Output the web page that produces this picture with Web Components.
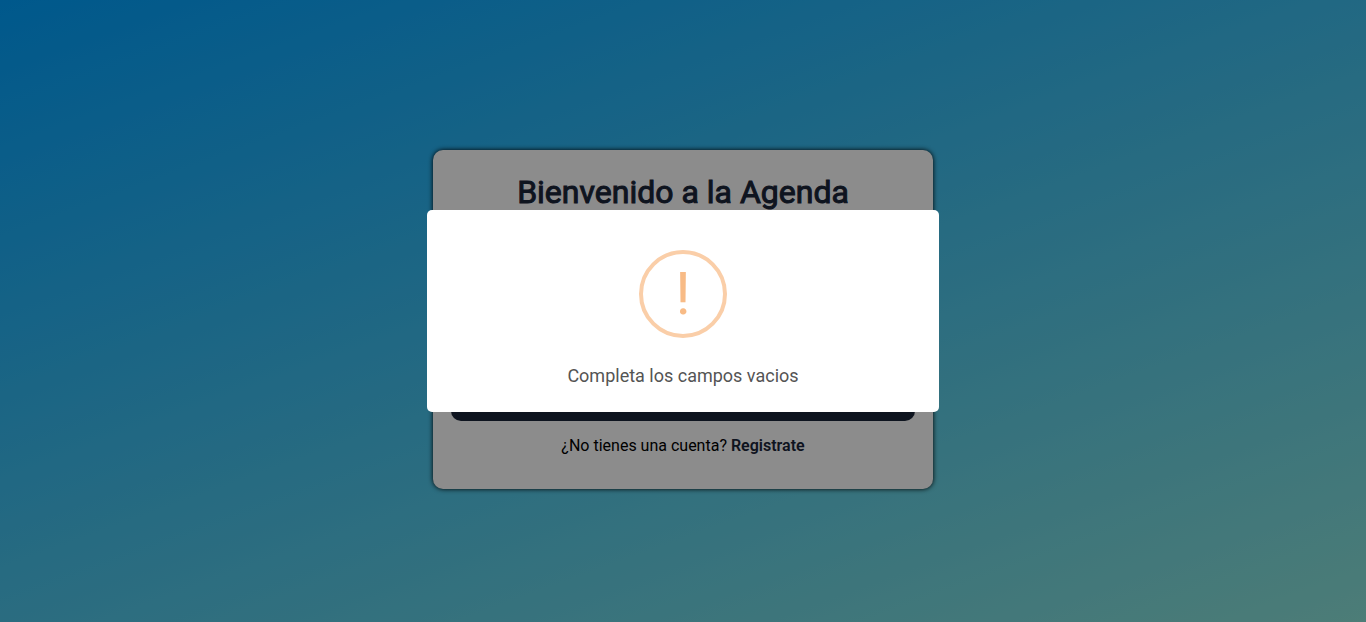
<!DOCTYPE html>
<html lang="es">
<head>
<meta charset="utf-8">
<meta name="viewport" content="width=device-width, initial-scale=1">
<title>Agenda</title>
<style>
  html { height: 100%; }
  body {
    margin: 0;
    min-height: 100%;
    font-family: Roboto, "Liberation Sans", sans-serif;
    font-size: 16px;
    background: linear-gradient(160deg, #0093e9 0%, #80d0c7 100%) fixed;
  }
</style>
</head>
<body>
<agenda-app></agenda-app>

<script>
class LoginCard extends HTMLElement {
  constructor() {
    super();
    this.attachShadow({ mode: "open" }).innerHTML = `
      <style>
        :host {
          display: block;
          box-sizing: border-box;
          width: 100%;
          max-width: 500px;
          padding: 24px 18px 34px;
          border-radius: 10px;
          background: #e9e9e9;
          box-shadow: 0 0 5px #000;
          text-align: center;
        }
        h1 {
          margin: 0;
          font-size: 32px;
          font-weight: 400;
          line-height: 36px;
          color: #182234;
          -webkit-text-stroke: 1px #182234;
        }
        form { display: grid; gap: 32px; margin: 27px 0 15px; }
        input, button {
          box-sizing: border-box;
          width: 100%;
          height: 40px;
          border: 0;
          border-radius: 10px;
          font: inherit;
        }
        input { padding: 0 12px; background: #fff; }
        button { background: #182234; color: #fff; }
        p { margin: 0; line-height: 19px; }
      </style>
      <h1><slot name="title"></slot></h1>
      <form>
        <input type="email" aria-label="Correo">
        <input type="password" aria-label="Clave">
        <button type="button" aria-label="Entrar"></button>
      </form>
      <p><slot></slot></p>`;
  }
}
customElements.define("login-card", LoginCard);

class WarningIcon extends HTMLElement {
  constructor() {
    super();
    this.attachShadow({ mode: "open" }).innerHTML = `
      <style>
        :host {
          display: flex;
          align-items: center;
          justify-content: center;
          width: 80px;
          height: 80px;
          border: 4px solid #facea8;
          border-radius: 50%;
          color: #f8bb86;
          font-size: 60px;
          line-height: 80px;
        }
      </style>
      <span>!</span>`;
  }
}
customElements.define("warning-icon", WarningIcon);

class AlertDialog extends HTMLElement {
  constructor() {
    super();
    this.attachShadow({ mode: "open" }).innerHTML = `
      <style>
        :host {
          position: fixed;
          inset: 0;
          display: flex;
          align-items: center;
          justify-content: center;
          padding: 10px;
          background: rgba(0, 0, 0, .4);
        }
        section {
          display: flex;
          flex-direction: column;
          align-items: center;
          gap: 27px;
          box-sizing: border-box;
          width: 100%;
          max-width: 512px;
          padding: 40px 20px 26px;
          border-radius: 5px;
          background: #fff;
        }
        p {
          margin: 0;
          font-size: 18px;
          line-height: 21px;
          color: #545454;
        }
      </style>
      <section role="alertdialog" aria-labelledby="message">
        <warning-icon></warning-icon>
        <p id="message"><slot></slot></p>
      </section>`;
  }
}
customElements.define("alert-dialog", AlertDialog);

class AgendaApp extends HTMLElement {
  constructor() {
    super();
    this.attachShadow({ mode: "open" }).innerHTML = `
      <style>
        :host { display: block; }
        main {
          display: flex;
          align-items: center;
          justify-content: center;
          box-sizing: border-box;
          min-height: 100vh;
          padding-top: 16px;
        }
        a {
          color: #182234;
          font-weight: 600;
          text-decoration: none;
        }
      </style>
      <main>
        <login-card>
          <span slot="title">Bienvenido a la Agenda</span>
          ¿No tienes una cuenta? <a href="#registro">Registrate</a>
        </login-card>
      </main>
      <alert-dialog>Completa los campos vacios</alert-dialog>`;
  }
}
customElements.define("agenda-app", AgendaApp);
</script>
</body>
</html>
